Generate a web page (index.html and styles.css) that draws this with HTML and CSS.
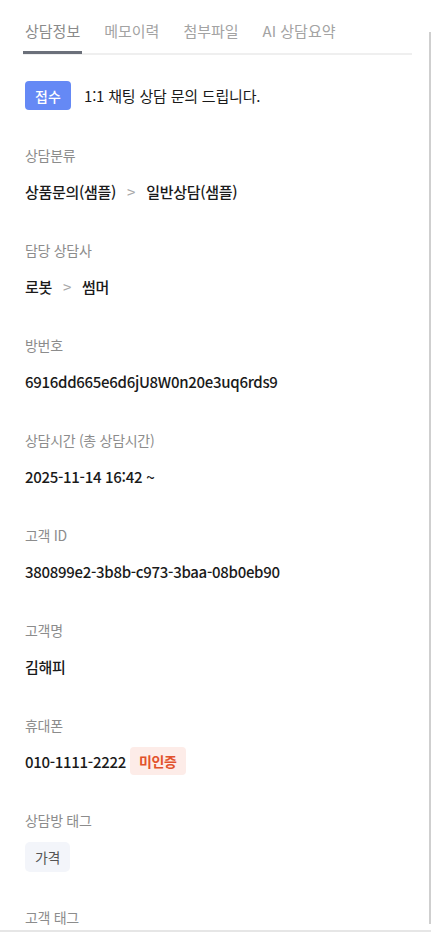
FILE: index.html
```html
<!DOCTYPE html>
<html lang="ko">
<head>
    <meta charset="UTF-8">
    <meta name="viewport" content="width=device-width, initial-scale=1.0">
    <title>상담정보</title>
    <link rel="stylesheet" href="styles.css">
</head>
<body>
    <div class="panel">
        <nav class="tabs">
            <span class="tab active">상담정보</span>
            <span class="tab">메모이력</span>
            <span class="tab">첨부파일</span>
            <span class="tab">AI 상담요약</span>
        </nav>

        <div class="content">
            <div class="title-row">
                <span class="status">접수</span>
                <span class="title">1:1 채팅 상담 문의 드립니다.</span>
            </div>

            <div class="field">
                <div class="label">상담분류</div>
                <div class="value">상품문의(샘플)<span class="sep">&gt;</span>일반상담(샘플)</div>
            </div>

            <div class="field">
                <div class="label">담당 상담사</div>
                <div class="value">로봇<span class="sep">&gt;</span>썸머</div>
            </div>

            <div class="field">
                <div class="label">방번호</div>
                <div class="value">6916dd665e6d6jU8W0n20e3uq6rds9</div>
            </div>

            <div class="field">
                <div class="label">상담시간 (총 상담시간)</div>
                <div class="value">2025-11-14 16:42 ~</div>
            </div>

            <div class="field">
                <div class="label">고객 ID</div>
                <div class="value">380899e2-3b8b-c973-3baa-08b0eb90</div>
            </div>

            <div class="field">
                <div class="label">고객명</div>
                <div class="value">김해피</div>
            </div>

            <div class="field">
                <div class="label">휴대폰</div>
                <div class="value">010-1111-2222<span class="badge-warn">미인증</span></div>
            </div>

            <div class="field">
                <div class="label">상담방 태그</div>
                <div class="value"><span class="tag">가격</span></div>
            </div>

            <div class="field">
                <div class="label">고객 태그</div>
            </div>
        </div>

        <div class="scrollbar"></div>
    </div>
</body>
</html>
```

FILE: styles.css
```css
body {
    margin: 0;
    padding: 0;
    background-color: #fff;
    color: #1a1a1a;
    font-family: "Noto Sans CJK KR", "Noto Sans", sans-serif;
}

.panel {
    position: relative;
    height: 930px;
    overflow: hidden;
    border-bottom: 2px solid #e6e6e6;
}

.tabs {
    display: flex;
    gap: 20px;
    margin: 0 19px 0 23px;
    border-bottom: 2px solid #efefef;
}

.tab {
    padding: 20px 2px 9px;
    margin-bottom: -1px;
    font-size: 15px;
    line-height: 22px;
    color: #a3a3a3;
    border-bottom: 3px solid transparent;
}

.tab.active {
    color: #8a8a8a;
    border-bottom-color: #6b707a;
}

.content {
    padding: 26px 20px 0 25px;
}

.title-row {
    display: flex;
    align-items: center;
    gap: 13px;
    margin-bottom: 35px;
}

.status {
    display: inline-flex;
    align-items: center;
    justify-content: center;
    width: 46px;
    height: 29px;
    border-radius: 4px;
    background-color: #6589f5;
    color: #fff;
    font-size: 14px;
    font-weight: 500;
}

.title {
    font-size: 15px;
    letter-spacing: -0.2px;
    color: #1a1a1a;
}

.field {
    margin-bottom: 35px;
}

.label {
    font-size: 14px;
    line-height: 20px;
    letter-spacing: -0.3px;
    color: #8c8c8c;
    margin-bottom: 12px;
}

.value {
    display: flex;
    align-items: center;
    min-height: 28px;
    font-size: 15px;
    font-weight: 500;
    letter-spacing: -0.3px;
    color: #1a1a1a;
}

.sep {
    margin: 0 11px;
    color: #a8a8a8;
    font-weight: 400;
}

.badge-warn {
    display: inline-flex;
    align-items: center;
    height: 28px;
    margin-left: 4px;
    padding: 0 9px;
    border-radius: 4px;
    background-color: #fdece8;
    color: #e2522c;
    font-size: 14px;
    font-weight: 700;
}

.tag {
    display: inline-flex;
    align-items: center;
    height: 30px;
    padding: 0 10px;
    border-radius: 5px;
    background-color: #f3f5fa;
    color: #555;
    font-size: 14px;
    font-weight: 400;
}

.scrollbar {
    position: absolute;
    top: 32px;
    right: 0;
    bottom: 6px;
    width: 2px;
    background-color: #cfcfcf;
}
```
